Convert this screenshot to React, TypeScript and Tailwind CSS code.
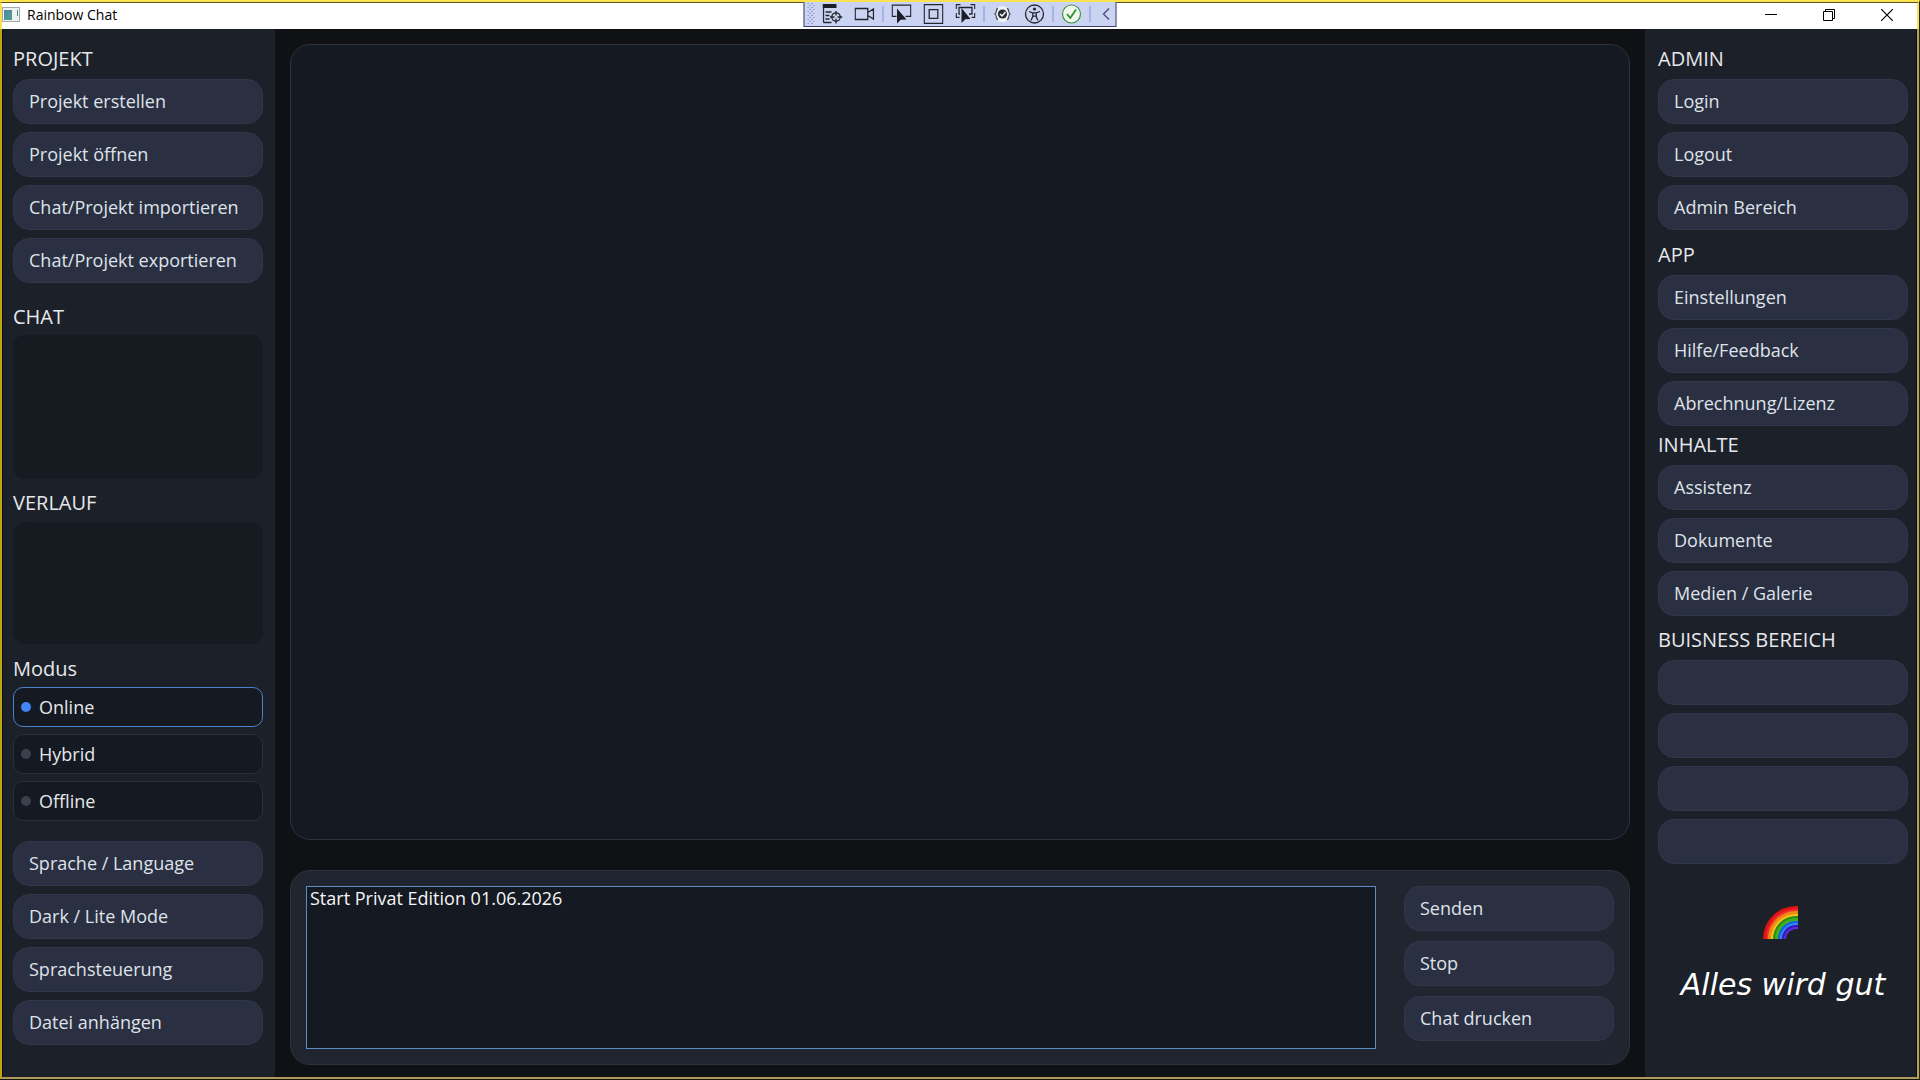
import { useState, type ReactNode } from "react";

function Heading({ children, className = "" }: { children: ReactNode; className?: string }) {
  return <h2 className={`text-xl leading-7 text-[#e6e8ec] ${className}`}>{children}</h2>;
}

function PanelButton({ label, strong = false }: { label: string; strong?: boolean }) {
  return (
    <button
      type="button"
      aria-label={label || "Frei"}
      className={`flex h-[45px] w-full shrink-0 items-center rounded-2xl border border-[#30374a] bg-[#2a3041] px-[15px] pb-[2px] text-left text-lg leading-6 text-[#dfe2ea] ${strong ? "font-medium" : "font-normal"}`}
    >
      {label}
    </button>
  );
}

function ButtonList({ items, strong = [] }: { items: string[]; strong?: string[] }) {
  return (
    <div className="flex flex-col gap-2">
      {items.map((label, i) => (
        <PanelButton key={i} label={label} strong={strong.includes(label)} />
      ))}
    </div>
  );
}

function ToolButton({ label, children }: { label: string; children: ReactNode }) {
  return (
    <button type="button" aria-label={label} className="size-5 shrink-0">
      <svg viewBox="0 0 20 20" className="size-5" fill="none" stroke="#23252f" strokeWidth="1.3">
        {children}
      </svg>
    </button>
  );
}

function ToolDivider() {
  return <span className="mx-2 h-4 w-px shrink-0 bg-[#8296cf]" />;
}

function DebugToolbar() {
  return (
    <div className="absolute left-1/2 -top-[3px] z-10 flex h-[27px] w-[313px] -translate-x-1/2 items-center border border-[#3c4064] bg-[#cbd3f2] pl-[3px]">
      <svg viewBox="0 0 7 22" className="mr-2 h-[22px] w-[7px] shrink-0" fill="#5c6796">
        {[0, 1, 2, 3, 4, 5].map((r) => (
          <g key={r}>
            <rect x="0" y={r * 4} width="1" height="1" />
            <rect x="4" y={r * 4} width="1" height="1" />
            <rect x="2" y={r * 4 + 2} width="1" height="1" />
            <rect x="6" y={r * 4 + 2} width="1" height="1" />
          </g>
        ))}
      </svg>
      <div className="flex gap-3">
        <ToolButton label="Visuelle Live-Struktur">
          <rect x="0" y="0" width="14" height="4" fill="#1c1e27" stroke="none" />
          <path d="M1 4v14.500M1 18.500h8M3 8h6M3 11.500h4M3 15h4" />
          <circle cx="13.500" cy="13" r="4.200" />
          <path d="M13.500 7v4.500M13.500 14.500V19.500M7.500 13h4.500M15 13h5" />
        </ToolButton>
        <ToolButton label="Aufnahme">
          <path d="M.7 4.500h12.600v11H.7zM13.300 8.500l5.700-3.500v10l-5.700-3.500" />
        </ToolButton>
      </div>
      <ToolDivider />
      <div className="flex gap-3">
        <ToolButton label="Element auswählen">
          <path d="M5 12.300H.7V1.200h18.600v11.100H14" />
          <path d="M5.500 4.500v15l3.700-3.700 5.800-.3z" fill="#1c1e27" stroke="none" />
        </ToolButton>
        <ToolButton label="Layout anzeigen">
          <path d="M.7.7h18.600v18.600H.7zM5.700 5.700h8.600v8.600H5.700z" />
        </ToolButton>
        <ToolButton label="Fokus verfolgen">
          <path d="M.7 5V.7H5M15 .7h4.300V5M.7 9v4.300H4M19.300 9v4.300H16M4.500 10H3.500V3.500h13V10h-3" />
          <path d="M6 4v15l3.700-3.700 5.300-.3z" fill="#1c1e27" stroke="none" />
        </ToolButton>
      </div>
      <ToolDivider />
      <div className="flex gap-3">
        <ToolButton label="Bindungsfehler">
          <circle cx="10" cy="10" r="8" fill="#eef0f6" stroke="none" />
          <path
            d="M5.500 4.500C3 4.500 4.500 9 2.500 10c2 1 .5 5.500 3 5.500M14.500 4.500C17 4.500 15.500 9 17.500 10c-2 1-.5 5.500-3 5.500"
            stroke="#4a4c56"
          />
          <circle cx="10" cy="10" r="4.600" fill="#2b2d36" stroke="none" />
          <path d="M7.500 10l2 2 3.500-4" stroke="#fff" />
        </ToolButton>
        <ToolButton label="Barrierefreiheit">
          <circle cx="10" cy="10" r="9" />
          <circle cx="10" cy="5" r="1.600" fill="#23252f" stroke="none" />
          <path d="M4.500 7.500l3.700 1.300h3.600l3.700-1.300M8.300 9v3.500L6.500 16.500M11.700 9v3.500l1.800 4M8.500 12.200h3" />
        </ToolButton>
      </div>
      <ToolDivider />
      <ToolButton label="Hot Reload">
        <circle cx="10" cy="10" r="9" fill="#f1f7ee" stroke="#3d9440" strokeWidth="1.200" />
        <path d="M5.500 10l3.300 4 5.700-8.500" stroke="#2f9434" strokeWidth="1.900" />
      </ToolButton>
      <ToolDivider />
      <ToolButton label="Einklappen">
        <path d="M10.500 4.500L5 10l5.500 5.500" stroke="#454d86" />
      </ToolButton>
    </div>
  );
}

function TitleBar() {
  return (
    <header className="relative flex h-[27px] shrink-0 items-center border-x-2 border-t border-x-[#fbe252] border-t-[#5d5216] bg-white pb-[3px]">
      <svg viewBox="0 0 18 15" className="h-[15px] w-[18px]" aria-hidden="true">
        <rect x=".5" y=".5" width="17" height="14" fill="#eef1f1" stroke="#a3aaac" />
        <rect x="2" y="3" width="8" height="10" fill="#4f9a94" />
        <path d="M2 3h8L2 13z" fill="#5a86a8" opacity=".6" />
        <rect x="15" y="3" width="1" height="6" fill="#4c8f86" />
      </svg>
      <h1 className="ml-[7px] text-sm leading-5 text-black">Rainbow Chat</h1>
      <DebugToolbar />
      <div className="mr-px ml-auto flex h-full">
        <button type="button" aria-label="Minimieren" className="grid w-[58px] place-items-center">
          <svg viewBox="0 0 12 12" className="size-3" stroke="#000" fill="none">
            <path d="M0 5.500h12" />
          </svg>
        </button>
        <button type="button" aria-label="Verkleinern" className="grid w-[58px] place-items-center">
          <svg viewBox="0 0 12 12" className="size-3" stroke="#000" fill="none">
            <path d="M.5 2.500h9v9h-9zM2.500 2.500v-2h9v9h-2" />
          </svg>
        </button>
        <button type="button" aria-label="Schließen" className="grid w-[58px] place-items-center">
          <svg viewBox="0 0 12 12" className="size-3" stroke="#000" strokeWidth="1.200" fill="none">
            <path d="M0 0l12 12M12 0L0 12" />
          </svg>
        </button>
      </div>
    </header>
  );
}

function ModeSwitch() {
  const [mode, setMode] = useState("Online");
  return (
    <fieldset>
      <legend className="text-xl leading-7 text-[#e6e8ec]">Modus</legend>
      <div className="mt-1 flex flex-col gap-[7px]">
        {["Online", "Hybrid", "Offline"].map((m) => (
          <label
            key={m}
            className={`flex h-10 items-center gap-2 rounded-[10px] border bg-[#151921] pl-[7px] text-lg leading-6 text-[#e6e8ec] ${
              mode === m ? "border-[#4a80cc]" : "border-[#2b303c]"
            } ${m === "Online" ? "font-normal" : "font-medium"}`}
          >
            <input
              type="radio"
              name="modus"
              checked={mode === m}
              onChange={() => setMode(m)}
              className="size-[10px] appearance-none rounded-full bg-[#3a404c] checked:bg-[#4285f4]"
            />
            {m}
          </label>
        ))}
      </div>
    </fieldset>
  );
}

function LeftPanel() {
  return (
    <aside className="flex w-[273px] shrink-0 flex-col border-l border-[#0c0e11] bg-[#1c2028] pt-4 pr-3 pl-[10px]">
      <Heading className="mb-[6px]">PROJEKT</Heading>
      <ButtonList
        items={["Projekt erstellen", "Projekt öffnen", "Chat/Projekt importieren", "Chat/Projekt exportieren"]}
      />
      <Heading className="mt-5 mb-1">CHAT</Heading>
      <div className="h-[144px] rounded-xl bg-[#161a21]" />
      <Heading className="mt-[10px] mb-[5px]">VERLAUF</Heading>
      <div className="mb-[11px] h-[122px] rounded-xl bg-[#161a21]" />
      <ModeSwitch />
      <div className="mt-5">
        <ButtonList
          items={["Sprache / Language", "Dark / Lite Mode", "Sprachsteuerung", "Datei anhängen"]}
          strong={["Sprache / Language"]}
        />
      </div>
    </aside>
  );
}

function Rainbow() {
  const bands = [
    { r: 33, c: "#e01212" },
    { r: 30, c: "#f03030" },
    { r: 28, c: "#f08a10" },
    { r: 25, c: "#f7c21c" },
    { r: 23, c: "#2a8a12" },
    { r: 21, c: "#3fae22" },
    { r: 18, c: "#1460e0" },
    { r: 16, c: "#2f8cf5" },
    { r: 14, c: "#3a12b8" },
    { r: 12, c: "#5a2be0" },
    { r: 10, c: "#1c2028" },
  ];
  return (
    <svg viewBox="0 0 35 33" className="mr-[5px] h-[33px] w-[35px]" role="img" aria-label="Regenbogen">
      {bands.map((b) => (
        <path
          key={b.r}
          d={`M${33 - b.r} 33A${b.r} ${b.r} 0 0 1 33 ${33 - b.r}H35V33Z`}
          fill={b.c}
        />
      ))}
    </svg>
  );
}

function RightPanel() {
  return (
    <aside className="flex w-[272px] shrink-0 flex-col border-r border-[#0c0e11] bg-[#1c2028] pt-4 pr-2 pl-[13px]">
      <Heading className="mb-[6px]">ADMIN</Heading>
      <ButtonList items={["Login", "Logout", "Admin Bereich"]} />
      <Heading className="mt-[11px] mb-[6px]">APP</Heading>
      <ButtonList
        items={["Einstellungen", "Hilfe/Feedback", "Abrechnung/Lizenz"]}
        strong={["Einstellungen", "Hilfe/Feedback", "Abrechnung/Lizenz"]}
      />
      <Heading className="mt-[5px] mb-[6px]">INHALTE</Heading>
      <ButtonList items={["Assistenz", "Dokumente", "Medien / Galerie"]} />
      <Heading className="mt-[10px] mb-[6px] font-medium">BUISNESS BEREICH</Heading>
      <ButtonList items={["", "", "", ""]} />
      <div className="mt-[42px] flex flex-col items-center gap-[26px]">
        <Rainbow />
        <p className="font-['Segoe_Script','DejaVu_Sans',cursive] text-[30px] leading-10 text-white italic">
          Alles wird gut
        </p>
      </div>
    </aside>
  );
}

export default function App() {
  return (
    <div className="flex h-screen flex-col overflow-hidden border-t-2 border-r border-b border-t-[#fbe252] border-r-[#2a2510] border-b-[#17140c] bg-[#0f1114] font-['Segoe_UI','Open_Sans',sans-serif]">
      <TitleBar />
      <div className="flex min-h-0 flex-1 border-r-2 border-b-2 border-l-2 border-r-[#b3a55a] border-b-[#b09a5c] border-l-[#bba714]">
        <LeftPanel />
        <main className="flex min-w-0 flex-1 flex-col gap-[30px] px-[15px] pt-[15px] pb-3">
          <section aria-label="Chatverlauf" className="flex-1 rounded-[20px] border border-[#2c323e] bg-[#151921]" />
          <form className="flex gap-7 rounded-[20px] border border-[#2c323e] bg-[#202530] px-[15px] py-[15px]">
            <textarea
              aria-label="Nachricht"
              defaultValue="Start Privat Edition 01.06.2026"
              className="h-[163px] min-w-0 flex-1 resize-none border border-[#5b8fc4] bg-[#151921] px-[3px] text-lg leading-[22px] text-[#f5f6f8] outline-none"
            />
            <div className="flex w-[210px] shrink-0 flex-col gap-[10px]">
              <PanelButton label="Senden" />
              <PanelButton label="Stop" />
              <PanelButton label="Chat drucken" />
            </div>
          </form>
        </main>
        <RightPanel />
      </div>
    </div>
  );
}
